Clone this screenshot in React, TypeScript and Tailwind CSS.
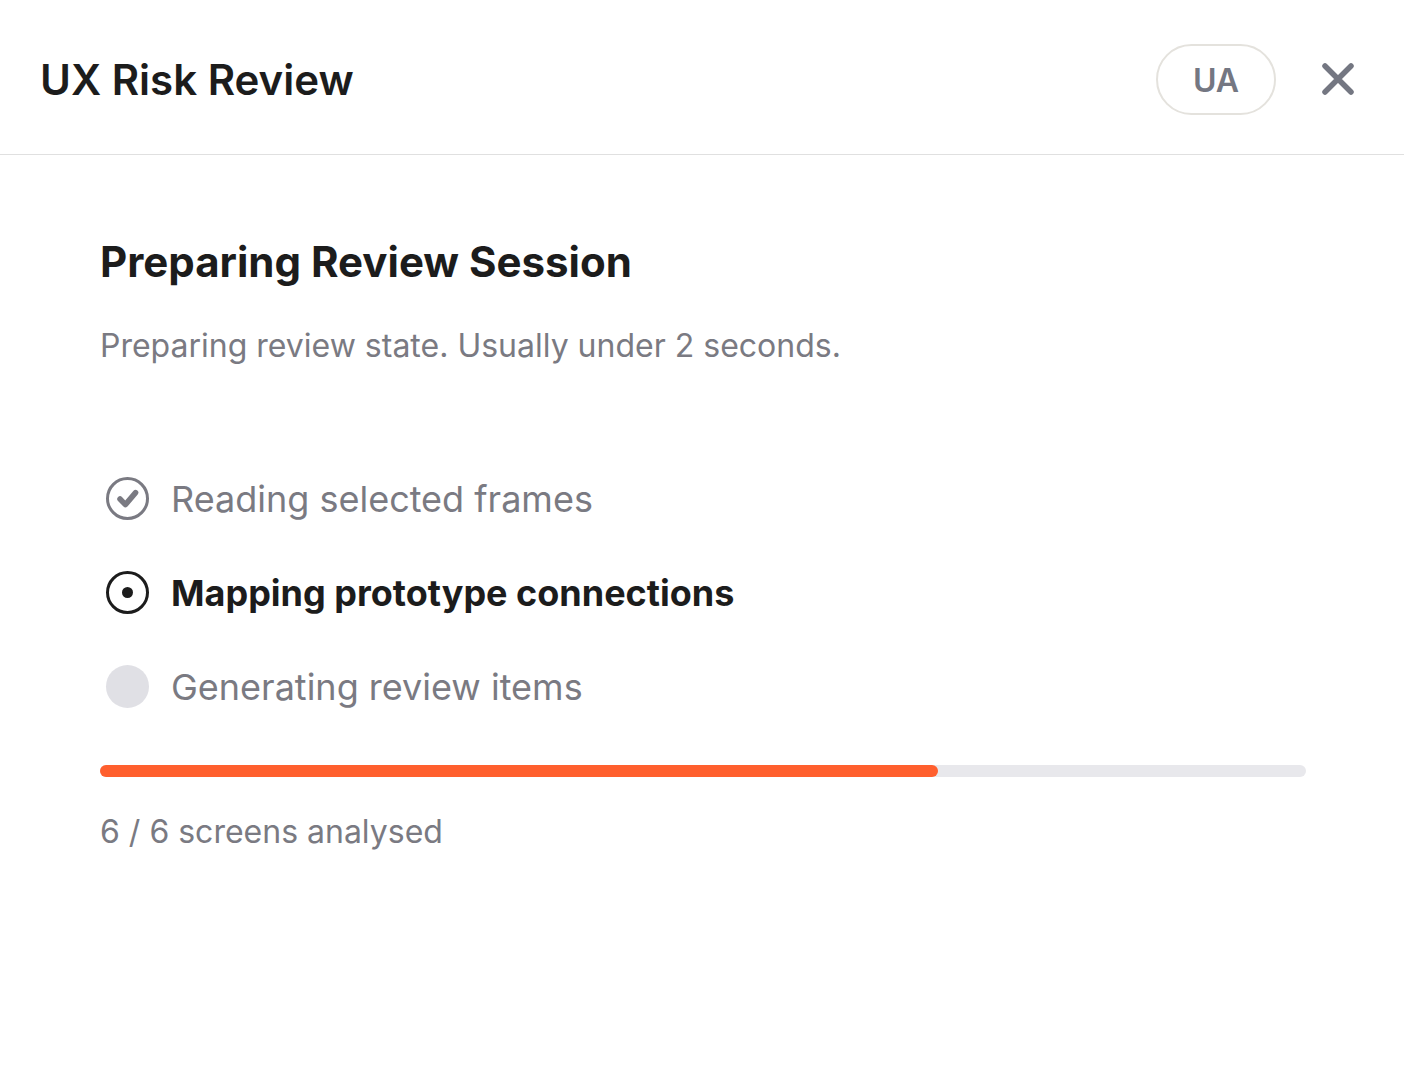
import { useState } from "react";

type StepStatus = "done" | "active" | "pending";

interface Step {
  id: string;
  label: string;
  status: StepStatus;
}

const steps: Step[] = [
  { id: "frames", label: "Reading selected frames", status: "done" },
  { id: "connections", label: "Mapping prototype connections", status: "active" },
  { id: "items", label: "Generating review items", status: "pending" },
];

function StepIcon({ status }: { status: StepStatus }) {
  if (status === "pending") {
    return (
      <svg viewBox="0 0 44 44" className="size-11 text-[#e0e0e5]" aria-hidden="true">
        <circle cx="22.5" cy="21.5" r="21.5" fill="currentColor" />
      </svg>
    );
  }

  if (status === "active") {
    return (
      <svg viewBox="0 0 44 44" className="size-11 text-[#1c1c1c]" fill="none" aria-hidden="true">
        <circle cx="22.5" cy="21.5" r="20" stroke="currentColor" strokeWidth="3" />
        <circle cx="22.5" cy="21.5" r="5.5" fill="currentColor" />
      </svg>
    );
  }

  return (
    <svg viewBox="0 0 44 44" className="size-11 text-[#7a7a82]" fill="none" aria-hidden="true">
      <circle cx="22.5" cy="21.5" r="20" stroke="currentColor" strokeWidth="3" />
      <path
        d="M15 22l5.4 5.6 10.2-12"
        stroke="currentColor"
        strokeWidth="5.5"
        strokeLinecap="round"
        strokeLinejoin="round"
      />
    </svg>
  );
}

function StepRow({ step }: { step: Step }) {
  return (
    <li className="flex items-center gap-[22px]">
      <StepIcon status={step.status} />
      <span
        className={
          step.status === "active"
            ? "text-[36px] leading-[44px] font-bold text-[#1c1c1c]"
            : "text-[36px] leading-[44px] text-[#7a7a82]"
        }
      >
        {step.label}
      </span>
    </li>
  );
}

export default function App() {
  const [open, setOpen] = useState(true);
  const progress = 69.5;

  if (!open) return null;

  return (
    <div className="min-h-screen bg-white font-['Inter',sans-serif] text-[#1c1c1c]">
      <header className="flex items-center justify-between border-b border-[#e0e0e0] pt-11 pr-11 pb-[39px] pl-10">
        <h1 className="text-[42px] leading-[50px] font-semibold">UX Risk Review</h1>
        <div className="flex items-center gap-10">
          <button
            type="button"
            className="h-[71px] w-[120px] rounded-full border-2 border-[#e4e2dd] pt-0.5 text-[32px] font-semibold text-[#747782]"
          >
            UA
          </button>
          <button
            type="button"
            aria-label="Close"
            className="text-[#747782]"
            onClick={() => setOpen(false)}
          >
            <svg viewBox="0 0 44 44" className="size-11" fill="none" aria-hidden="true">
              <path
                d="M9 8l26 26M35 8L9 34"
                stroke="currentColor"
                strokeWidth="5.5"
                strokeLinecap="round"
              />
            </svg>
          </button>
        </div>
      </header>

      <main className="pt-[81px] pr-[98px] pb-16 pl-[100px]">
        <h2 className="text-[42px] leading-[52px] font-bold">Preparing Review Session</h2>
        <p className="mt-9 text-[32px] leading-[44px] text-[#7a7a82]">
          Preparing review state. Usually under 2 seconds.
        </p>

        <ul className="mt-[109px] flex flex-col gap-[50px] pl-[5px]">
          {steps.map((step) => (
            <StepRow key={step.id} step={step} />
          ))}
        </ul>

        <div
          role="progressbar"
          aria-label="Review preparation"
          aria-valuenow={progress}
          aria-valuemin={0}
          aria-valuemax={100}
          className="mt-14 h-3 rounded-full bg-[#e8e8ec]"
        >
          <div className="h-full rounded-full bg-[#ff5f2e]" style={{ width: `${progress}%` }} />
        </div>
        <p className="mt-[33px] text-[32px] leading-[44px] text-[#7a7a82]">6 / 6 screens analysed</p>
      </main>
    </div>
  );
}
